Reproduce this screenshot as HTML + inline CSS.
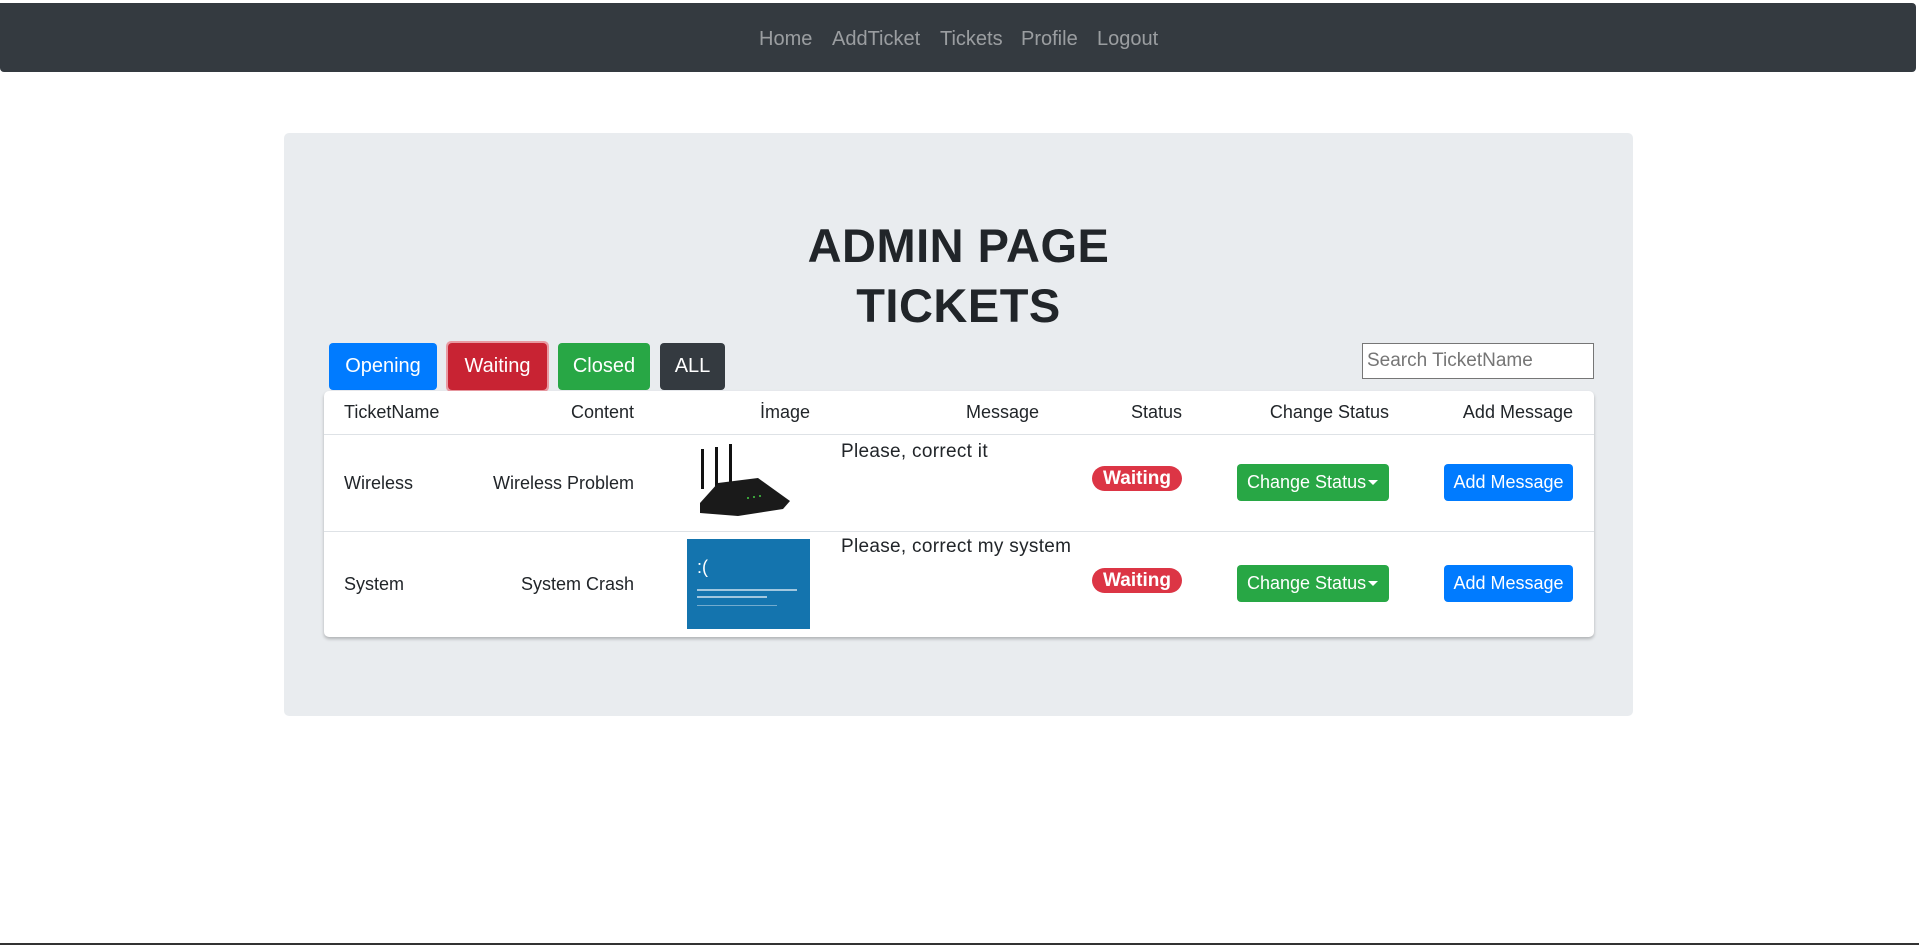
<!DOCTYPE html>
<html><head><meta charset="utf-8"><style>
*{box-sizing:border-box;margin:0;padding:0}
body{width:1919px;height:945px;background:#fff;position:relative;overflow:hidden;font-family:"Liberation Sans",Arial,sans-serif;color:#212529}
.a{position:absolute}
.nav{left:0;top:3px;width:1916px;height:69px;background:#343a40;border-radius:0 4px 4px 4px}
.nav span{position:absolute;top:24px;font-size:20px;color:rgba(255,255,255,.5);line-height:24px}
.jumbo{left:284px;top:133px;width:1349px;height:583px;background:#e9ecef;border-radius:5px}
h1{position:absolute;left:284px;width:1349px;top:216px;text-align:center;font-size:47px;font-weight:bold;line-height:60px;color:#212529;letter-spacing:0.5px}
.btn{position:absolute;top:343px;height:47px;color:#fff;font-size:20px;line-height:47px;text-align:center;border-radius:4px}
.search{left:1362px;top:343px;width:232px;height:36px;border:1px solid #767676;background:#fff;font-size:19px;color:#757575;padding:5px 4px;line-height:24px}
.card{left:324px;top:391px;width:1270px;height:246px;background:#fff;border-radius:5px;box-shadow:0 2px 3px rgba(0,0,0,.25)}
.t{position:absolute;font-size:18px;line-height:22px;white-space:nowrap}
.r{text-align:right}
.hl{position:absolute;left:324px;width:1270px;height:2px;background:#dee2e6}
.badge{position:absolute;width:90px;height:25px;background:#dc3545;color:#fff;border-radius:13px;font-weight:bold;font-size:19px;line-height:25px;text-align:center}
.cs{position:absolute;width:152px;height:37px;background:#28a745;color:#fff;border-radius:4px;font-size:18px;line-height:37px;padding-left:10px}
.cs:after{content:"";position:absolute;right:11px;top:16px;border-left:5px solid transparent;border-right:5px solid transparent;border-top:5px solid #fff}
.am{position:absolute;width:129px;height:37px;background:#007bff;color:#fff;border-radius:4px;font-size:18px;line-height:37px;text-align:center}
.m{font-size:19px;letter-spacing:0.3px}
</style></head><body>
<div class="a nav">
<span style="left:759px">Home</span><span style="left:832px">AddTicket</span><span style="left:940px">Tickets</span><span style="left:1021px">Profile</span><span style="left:1097px">Logout</span>
</div>
<div class="a jumbo"></div>
<h1>ADMIN PAGE<br>TICKETS</h1>
<div class="btn" style="left:329px;width:108px;background:#007bff">Opening</div>
<div class="btn" style="left:446px;width:103px;top:341px;height:51px;background:#e99aa2;border-radius:5px"></div>
<div class="btn" style="left:448px;width:99px;top:343px;background:#c82333;line-height:47px">Waiting</div>
<div class="btn" style="left:558px;width:92px;background:#28a745">Closed</div>
<div class="btn" style="left:660px;width:65px;background:#343a40">ALL</div>
<div class="a search">Search TicketName</div>
<div class="a card"></div>
<div class="hl" style="top:434px;height:1px"></div>
<div class="hl" style="top:531px;height:1px"></div>
<div class="t" style="left:344px;top:401px">TicketName</div>
<div class="t r" style="right:1285px;top:401px">Content</div>
<div class="t r" style="right:1109px;top:401px">İmage</div>
<div class="t r" style="right:880px;top:401px">Message</div>
<div class="t r" style="right:737px;top:401px">Status</div>
<div class="t r" style="right:530px;top:401px">Change Status</div>
<div class="t r" style="right:346px;top:401px">Add Message</div>

<div class="t" style="left:344px;top:472px">Wireless</div>
<div class="t r" style="right:1285px;top:472px">Wireless Problem</div>
<svg class="a" style="left:698px;top:443px" width="100" height="80" viewBox="0 0 100 80">
<rect x="3" y="6" width="3" height="40" fill="#111"/><rect x="17" y="4" width="3" height="40" fill="#111"/><rect x="31" y="1" width="3" height="40" fill="#111"/>
<path d="M2 60 L20 40 L60 35 L92 58 L85 66 L40 73 L2 70Z" fill="#1a1a1a"/>
<circle cx="50" cy="55" r="1" fill="#4c4"/><circle cx="56" cy="54" r="1" fill="#4c4"/><circle cx="62" cy="53" r="1" fill="#4c4"/>
</svg>
<div class="t m" style="left:841px;top:441px">Please, correct it</div>
<div class="badge" style="left:1092px;top:466px">Waiting</div>
<div class="cs" style="left:1237px;top:464px">Change Status</div>
<div class="am" style="left:1444px;top:464px">Add Message</div>

<div class="t" style="left:344px;top:573px">System</div>
<div class="t r" style="right:1285px;top:573px">System Crash</div>
<div class="a" style="left:687px;top:539px;width:123px;height:90px;background:#1474ae;color:#fff">
<div style="position:absolute;left:10px;top:18px;font-size:18px">:(</div>
<div style="position:absolute;left:10px;top:50px;width:100px;height:2px;background:rgba(255,255,255,.6)"></div>
<div style="position:absolute;left:10px;top:57px;width:70px;height:2px;background:rgba(255,255,255,.6)"></div>
<div style="position:absolute;left:10px;top:66px;width:80px;height:1px;background:rgba(255,255,255,.4)"></div>
</div>
<div class="t m" style="left:841px;top:536px">Please, correct my system</div>
<div class="badge" style="left:1092px;top:568px">Waiting</div>
<div class="cs" style="left:1237px;top:565px">Change Status</div>
<div class="am" style="left:1444px;top:565px">Add Message</div>
<div class="a" style="left:0;top:943px;width:1919px;height:2px;background:#333"></div>
</body></html>
